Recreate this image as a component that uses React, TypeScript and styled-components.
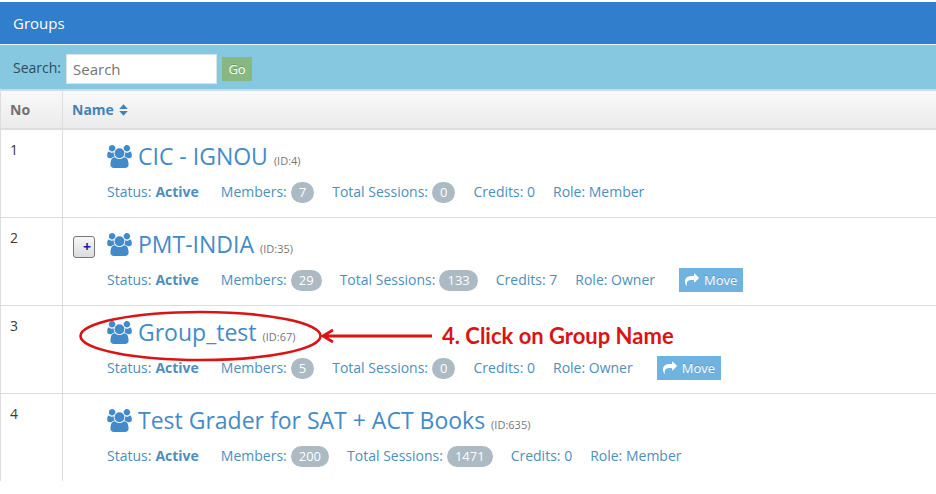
import React from "react";
import styled, { createGlobalStyle } from "styled-components";

const GlobalStyle = createGlobalStyle`
  * { box-sizing: border-box; }
  body {
    margin: 0;
    background: #ffffff;
    color: #393939;
    font-family: "Open Sans", "Noto Sans", sans-serif;
    font-size: 14px;
    line-height: 20px;
  }
`;

const Page = styled.main`
  padding-top: 2px;
  overflow-x: hidden;
`;

const Header = styled.header`
  height: 43px;
  padding: 0 13px;
  display: flex;
  align-items: center;
  background: #307ecc;
  border-bottom: 1px solid #e3f6f8;
`;

const Heading = styled.h1`
  margin: 0;
  color: #ffffff;
  font-size: 15px;
  font-weight: 400;
  line-height: 20px;
`;

const SearchBar = styled.form`
  height: 44px;
  padding: 4px 13px 0;
  display: flex;
  align-items: center;
  background: #85c8e0;
`;

const SearchLabel = styled.label`
  margin-right: 5px;
  padding-bottom: 2px;
  color: #2f4a5a;
`;

const SearchInput = styled.input`
  width: 151px;
  height: 30px;
  margin-right: 5px;
  padding: 0 6px;
  border: 1px solid #d5e4e8;
  border-radius: 0;
  background: #ffffff;
  color: #696969;
  font: inherit;
  font-size: 15px;
  &::placeholder { color: #757575; opacity: 1; }
`;

const GoButton = styled.button`
  width: 30px;
  height: 24px;
  padding: 0;
  border: 0;
  background: #87b87f;
  color: #ffffff;
  font: inherit;
  font-size: 13px;
  text-shadow: 0 -1px 0 rgba(0, 0, 0, 0.2);
`;

const Table = styled.table`
  width: 100%;
  table-layout: fixed;
  border-collapse: separate;
  border-spacing: 0;
  border-top: 2px solid #cddce3;
  border-left: 1px solid #dddddd;
`;

const HeadCell = styled.th<{ $narrow?: boolean }>`
  width: ${(p) => (p.$narrow ? "62px" : "auto")};
  height: 39px;
  padding: 0 9px;
  text-align: left;
  font-weight: 700;
  color: ${(p) => (p.$narrow ? "#707070" : "#4383b4")};
  background: linear-gradient(#f9f9f9, #ebebeb);
  border-right: ${(p) => (p.$narrow ? "1px solid #dddddd" : "0")};
  border-bottom: 2px solid #dddddd;
`;

const SortButton = styled.button`
  display: inline-flex;
  align-items: center;
  gap: 5px;
  padding: 0;
  border: 0;
  background: none;
  color: inherit;
  font: inherit;
`;

const Row = styled.tr`
  &:not(:last-child) td { border-bottom: 1px solid #dddddd; }
`;

const NumberCell = styled.td`
  padding: 10px 9px;
  vertical-align: top;
  border-right: 1px solid #dddddd;
`;

const NameCell = styled.td`
  position: relative;
  padding: 9px 10px 13px;
  vertical-align: top;
`;

const Entry = styled.div`
  display: grid;
  grid-template-columns: 34px 1fr;
`;

const ExpandButton = styled.button`
  width: 22px;
  height: 22px;
  margin-top: 9px;
  padding: 0 3px;
  border: 1px solid #777777;
  border-radius: 3px;
  background: linear-gradient(#f7f7f7, #dcdcdc);
  color: #1818b8;
  font: 700 14px/20px "Open Sans", sans-serif;
  text-align: right;
`;

const Details = styled.div`
  grid-column: 2;
  color: #4c8fbd;
  white-space: nowrap;
`;

const TitleLine = styled.div`
  height: 34px;
  display: flex;
  align-items: baseline;
`;

const TitleLink = styled.a`
  color: #428bca;
  font-size: 23px;
  font-weight: 500;
  line-height: 34px;
  text-decoration: none;

  svg {
    margin-right: 6px;
    vertical-align: -3px;
  }
`;

const GroupId = styled.small`
  margin-left: 6px;
  color: #777777;
  font-size: 11px;
`;

const Meta = styled.div`
  height: 24px;
  margin-top: 7px;
  display: flex;
  align-items: center;
  gap: 18px;
`;

const MetaItem = styled.span<{ $wide?: boolean }>`
  display: flex;
  align-items: center;
  gap: 4px;
  margin-right: ${(p) => (p.$wide ? "4px" : "0")};
`;

const Badge = styled.span`
  padding: 0 8px;
  border-radius: 11px;
  background: #abbac3;
  color: #ffffff;
  font-size: 13px;
  line-height: 21px;
`;

const MoveButton = styled.button`
  height: 24px;
  margin-left: 6px;
  padding: 0 6px;
  display: flex;
  align-items: center;
  gap: 5px;
  border: 0;
  background: #6fb3e0;
  color: #ffffff;
  font: inherit;
  font-size: 13px;
  text-shadow: 0 -1px 0 rgba(0, 0, 0, 0.2);
`;

const Callout = styled.div`
  position: absolute;
  top: 4px;
  left: 16px;
  display: flex;
  align-items: center;
  gap: 9px;
  pointer-events: none;
  color: #da1414;
  font: 700 22px/44px Lato, "Open Sans", sans-serif;
  white-space: nowrap;
`;

const UsersIcon = () => (
  <svg width="25" height="23" viewBox="0 0 1920 1792" fill="currentColor" aria-hidden="true">
    <path d="M593 896q-162 5-265 128h-134q-82 0-138-40.5t-56-118.5q0-353 124-353 6 0 43.5 21t97.5 42.5 119 21.5q67 0 133-23-5 37-5 66 0 139 81 256zm1071 637q0 120-73 189.5t-194 69.5h-874q-121 0-194-69.5t-73-189.5q0-53 3.5-103.5t14-109 26.5-108.5 43-97.5 62-81 85.5-53.5 111.5-20q10 0 43 21.5t73 48 107 48 135 21.5 135-21.5 107-48 73-48 43-21.5q61 0 111.5 20t85.5 53.5 62 81 43 97.5 26.5 108.5 14 109 3.5 103.5zm-1024-1277q0 106-75 181t-181 75-181-75-75-181 75-181 181-75 181 75 75 181zm704 384q0 159-112.5 271.5t-271.5 112.5-271.5-112.5-112.5-271.5 112.5-271.5 271.5-112.5 271.5 112.5 112.5 271.5zm576 225q0 78-56 118.5t-138 40.5h-134q-103-123-265-128 81-117 81-256 0-29-5-66 66 23 133 23 59 0 119-21.5t97.5-42.5 43.5-21q124 0 124 353zm-128-609q0 106-75 181t-181 75-181-75-75-181 75-181 181-75 181 75 75 181z" />
  </svg>
);

const ShareIcon = () => (
  <svg width="14" height="14" viewBox="0 0 1792 1792" fill="currentColor" aria-hidden="true">
    <path d="M1792 640q0 26-19 45l-512 512q-19 19-45 19t-45-19-19-45v-256h-224q-98 0-175.5 6t-154 21.5-133 42.5-105.5 69.5-80 101-48.5 138.5-17.5 181q0 55 5 123 0 6 2.5 23.5t2.5 26.5q0 15-8.5 25t-23.5 10q-16 0-28-17-7-9-13-22t-13.5-30-10.5-24q-127-285-127-451 0-199 53-333 162-403 875-403h224v-256q0-26 19-45t45-19 45 19l512 512q19 19 19 45z" />
  </svg>
);

const SortIcon = () => (
  <svg width="9" height="12" viewBox="0 0 9 12" fill="currentColor" aria-hidden="true">
    <path d="M4.5 0.3 8.8 5H0.2zM0.2 7h8.6L4.5 11.7z" />
  </svg>
);

const CalloutMark = () => (
  <svg width="354" height="52" viewBox="0 0 354 52" fill="none" stroke="currentColor" aria-hidden="true">
    <ellipse cx="121.5" cy="26" rx="120" ry="24" strokeWidth="2.6" />
    <path d="M353 26H244M254 20 244 26 254 32" strokeWidth="2.8" />
  </svg>
);

type Group = {
  name: string;
  id: number;
  members: number;
  sessions: number;
  credits: number;
  role: "Member" | "Owner";
  expandable?: boolean;
  note?: string;
};

const groups: Group[] = [
  { name: "CIC - IGNOU", id: 4, members: 7, sessions: 0, credits: 0, role: "Member" },
  { name: "PMT-INDIA", id: 35, members: 29, sessions: 133, credits: 7, role: "Owner", expandable: true },
  { name: "Group_test", id: 67, members: 5, sessions: 0, credits: 0, role: "Owner", note: "4. Click on Group Name" },
  { name: "Test Grader for SAT + ACT Books", id: 635, members: 200, sessions: 1471, credits: 0, role: "Member" },
];

function GroupRow({ group, index }: { group: Group; index: number }) {
  return (
    <Row>
      <NumberCell>{index}</NumberCell>
      <NameCell>
        <Entry>
          {group.expandable && <ExpandButton type="button" aria-label="Expand">+</ExpandButton>}
          <Details>
            <TitleLine>
              <TitleLink href="#">
                <UsersIcon />
                {group.name}
              </TitleLink>
              <GroupId>(ID:{group.id})</GroupId>
            </TitleLine>
            <Meta>
              <MetaItem $wide>Status: <b>Active</b></MetaItem>
              <MetaItem>Members: <Badge>{group.members}</Badge></MetaItem>
              <MetaItem>Total Sessions: <Badge>{group.sessions}</Badge></MetaItem>
              <MetaItem>Credits: {group.credits}</MetaItem>
              <MetaItem>Role: {group.role}</MetaItem>
              {group.role === "Owner" && (
                <MoveButton type="button"><ShareIcon />Move</MoveButton>
              )}
            </Meta>
          </Details>
        </Entry>
        {group.note && <Callout><CalloutMark />{group.note}</Callout>}
      </NameCell>
    </Row>
  );
}

export default function App() {
  return (
    <Page>
      <GlobalStyle />
      <Header><Heading>Groups</Heading></Header>
      <SearchBar onSubmit={(e) => e.preventDefault()}>
        <SearchLabel htmlFor="search">Search:</SearchLabel>
        <SearchInput id="search" placeholder="Search" />
        <GoButton type="submit">Go</GoButton>
      </SearchBar>
      <Table>
        <thead>
          <tr>
            <HeadCell $narrow>No</HeadCell>
            <HeadCell><SortButton type="button">Name<SortIcon /></SortButton></HeadCell>
          </tr>
        </thead>
        <tbody>
          {groups.map((g, i) => <GroupRow key={g.id} group={g} index={i + 1} />)}
        </tbody>
      </Table>
    </Page>
  );
}
